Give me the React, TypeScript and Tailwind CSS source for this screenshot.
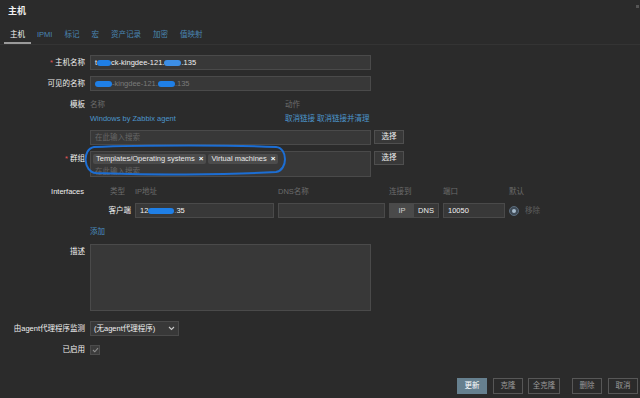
import React from "react";

const Blob = ({ w, light }: { w: number; light?: boolean }) => (
  <span
    className={`inline-block h-[6px] rounded-full align-middle blur-[0.6px] ${light ? "bg-[#3d8fe6]" : "bg-[#1f7fe6]"}`}
    style={{ width: w }}
  />
);

const Label = ({ children, req }: { children: React.ReactNode; req?: boolean }) => (
  <div className="w-[85px] shrink-0 text-right text-[#f0f0f0]">
    {req && <span className="text-[#e45959] mr-[2px]">*</span>}
    {children}
  </div>
);

const Input = ({ className = "", children }: { className?: string; children?: React.ReactNode }) => (
  <div className={`h-[15px] bg-[#383838] border border-[#4a4a4a] flex items-center px-[4px] ${className}`}>{children}</div>
);

const SelectBtn = () => (
  <div className="ml-[3px] w-[30px] h-[14px] bg-[#383838] border border-[#4f4f4f] flex items-center justify-center text-[#f0f0f0]">选择</div>
);

const Tag = ({ text }: { text: string }) => (
  <div className="h-[10px] bg-[#4c4c4c] rounded-[2px] flex items-center px-[3px] mr-[2px] text-[#e8e8e8]">
    {text}
    <span className="ml-[4px] font-bold text-white text-[8px] leading-none">×</span>
  </div>
);

export default function App() {
  return (
    <div className="w-[640px] h-[398px] bg-[#2b2b2b] text-[#f0f0f0] text-[7.5px] leading-[10px] relative overflow-hidden font-['Liberation_Sans','Noto_Sans_CJK_SC',sans-serif]">
      <div className="absolute right-[1px] top-[5px] w-[3px] h-[3px] bg-[#555]" />
      {/* title */}
      <div className="h-[22px] flex items-center pl-[8px] text-[9px] font-bold text-[#f2f2f2]">主机</div>
      {/* tabs */}
      <div className="h-[23px] flex items-stretch pl-[4px] border-b border-[#343434]">
        {["主机", "IPMI", "标记", "宏", "资产记录", "加密", "值映射"].map((t, i) => (
          <div
            key={t}
            className={`px-[6px] flex items-center pt-[5px] ${i === 0 ? "text-[#f2f2f2] border-b-2 border-[#9a9a9a]" : "text-[#4a86b4] border-b-2 border-transparent"}`}
          >
            {t}
          </div>
        ))}
      </div>

      <div className="pt-[10px]">
        {/* host name */}
        <div className="flex items-center">
          <Label req>主机名称</Label>
          <Input className="ml-[5px] w-[281px]">
            <span>t</span>
            <Blob w={14} />
            <span>ck-kingdee-121.</span>
            <Blob w={17} light />
            <span>.135</span>
          </Input>
        </div>
        <div className="flex items-center mt-[6px]">
          <Label>可见的名称</Label>
          <Input className="ml-[5px] w-[281px] text-[#7a7a7a]">
            <Blob w={17} />
            <span>-kingdee-121.</span>
            <Blob w={17} />
            <span>.135</span>
          </Input>
        </div>

        {/* templates */}
        <div className="flex mt-[9px]">
          <Label>模板</Label>
          <div className="ml-[5px]">
            <div className="flex w-[281px] text-[#6c6c6c]">
              <div className="w-[195px]">名称</div>
              <div>动作</div>
            </div>
            <div className="flex w-[281px] mt-[4px] text-[#4b96cc]">
              <div className="w-[195px]">Windows by Zabbix agent</div>
              <div className="whitespace-nowrap">取消链接 取消链接并清理</div>
            </div>
            <div className="flex mt-[6px]">
              <Input className="w-[281px] text-[#666]">在此输入搜索</Input>
              <SelectBtn />
            </div>
          </div>
        </div>

        {/* groups */}
        <div className="flex mt-[6px]">
          <div className="pt-[3px]">
            <Label req>群组</Label>
          </div>
          <div className="ml-[5px] flex">
            <div className="w-[281px] h-[26px] bg-[#383838] border border-[#4a4a4a] pl-[2px] pt-[2px]">
              <div className="flex">
                <Tag text="Templates/Operating systems" />
                <Tag text="Virtual machines" />
              </div>
              <div className="pl-[2px] mt-[3px] text-[#666]">在此输入搜索</div>
            </div>
            <SelectBtn />
          </div>
        </div>

        {/* interfaces */}
        <div className="flex mt-[10px]">
          <Label>
            <span className="pr-[1px]">Interfaces</span>
          </Label>
          <div className="ml-[5px]">
            <div className="grid grid-cols-[41px_139px_107px_50px_62px_auto] gap-x-[4px] text-[#6c6c6c]">
              <div className="pl-[20px]">类型</div>
              <div>IP地址</div>
              <div>DNS名称</div>
              <div>连接到</div>
              <div>端口</div>
              <div>默认</div>
            </div>
            <div className="grid grid-cols-[41px_139px_107px_50px_62px_auto] gap-x-[4px] mt-[6px] items-center">
              <div className="text-right text-[#f0f0f0]">客户端</div>
              <Input>
                <span>12</span>
                <Blob w={26} />
                <span className="text-[#9a9a9a]">.</span>
                <span>35</span>
              </Input>
              <Input />
              <div className="h-[15px] flex border border-[#4a4a4a]">
                <div className="w-[24px] bg-[#4a4a4a] flex items-center justify-center text-[#d0d0d0]">IP</div>
                <div className="flex-1 bg-[#383838] flex items-center justify-center text-[#ececec]">DNS</div>
              </div>
              <Input>10050</Input>
              <div className="flex items-center">
                <div className="w-[10px] h-[10px] rounded-full bg-[#3f4b57] border border-[#5a6b7c] flex items-center justify-center">
                  <div className="w-[4px] h-[4px] rounded-full bg-[#a8bccd]" />
                </div>
                <span className="ml-[6px] text-[#5e5e5e]">移除</span>
              </div>
            </div>
          </div>
        </div>

        <div className="flex mt-[9px]">
          <Label> </Label>
          <div className="ml-[5px] text-[#4a8fc0]">添加</div>
        </div>

        {/* description */}
        <div className="flex mt-[7px]">
          <div className="pt-[3px]">
            <Label>描述</Label>
          </div>
          <div className="ml-[5px] w-[281px] h-[67px] bg-[#383838] border border-[#4a4a4a]" />
        </div>

        {/* proxy */}
        <div className="flex items-center mt-[10px]">
          <Label>由agent代理程序监测</Label>
          <div className="ml-[5px] w-[89px] h-[15px] bg-[#383838] border border-[#4a4a4a] flex items-center justify-between px-[3px]">
            <span>(无agent代理程序)</span>
            <svg width="7" height="5" viewBox="0 0 7 5">
              <path d="M1 1 L3.5 3.5 L6 1" stroke="#c8c8c8" strokeWidth="1.1" fill="none" />
            </svg>
          </div>
        </div>

        {/* enabled */}
        <div className="flex items-center mt-[9px]">
          <Label>已启用</Label>
          <div className="ml-[5px] w-[10px] h-[10px] bg-[#3c3c3c] border border-[#4c4c4c] flex items-center justify-center">
            <svg width="7" height="6" viewBox="0 0 7 6">
              <path d="M1 3 L2.8 4.8 L6 1.2" stroke="#8d8d8d" strokeWidth="1.1" fill="none" />
            </svg>
          </div>
        </div>

        {/* buttons */}
        <div className="flex justify-end pr-[2px] mt-[23px]">
          <div className="w-[30px] h-[16px] bg-[#66808f] flex items-center justify-center text-white">更新</div>
          <div className="ml-[6px] w-[30px] h-[16px] border border-[#575757] flex items-center justify-center text-[#9a9a9a]">克隆</div>
          <div className="ml-[5px] w-[32px] h-[16px] border border-[#575757] flex items-center justify-center text-[#9a9a9a]">全克隆</div>
          <div className="ml-[12px] w-[30px] h-[16px] border border-[#575757] flex items-center justify-center text-[#9a9a9a]">删除</div>
          <div className="ml-[6px] w-[30px] h-[16px] border border-[#575757] flex items-center justify-center text-[#9a9a9a]">取消</div>
        </div>
      </div>

      {/* hand-drawn annotation */}
      <svg className="absolute left-[80px] top-[143px]" width="212" height="34" viewBox="0 0 212 34">
        <path
          d="M14 4 C60 2 160 2 196 4 C208 5 208 27 196 29 C150 32 60 32 16 30 C3 29 2 6 14 4 Z"
          stroke="#1c6ed4"
          strokeWidth="2"
          fill="none"
        />
      </svg>
    </div>
  );
}
